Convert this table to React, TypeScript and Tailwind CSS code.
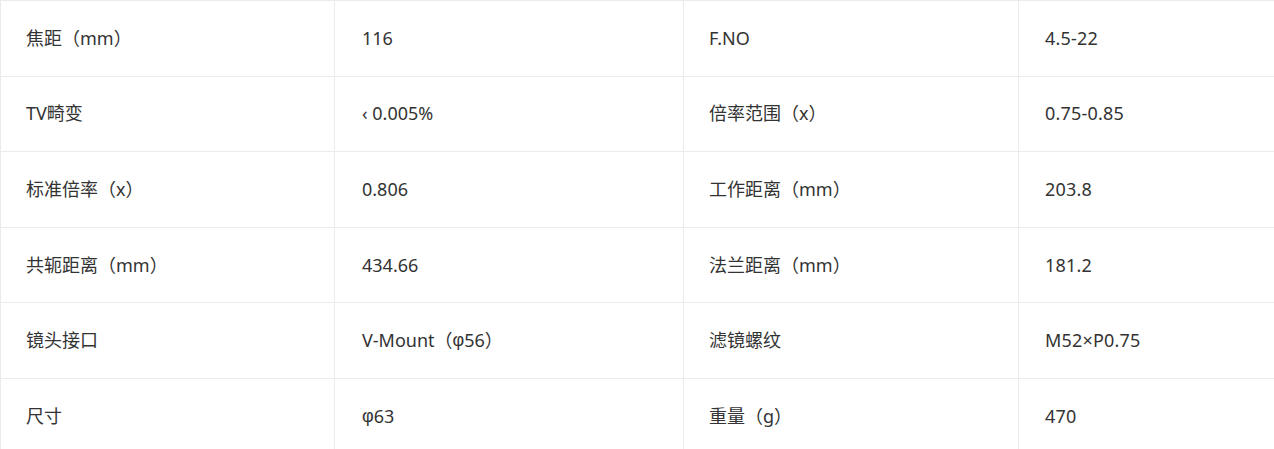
import React from 'react';

type Spec = { label: string; value: React.ReactNode };

const Phi = () => <span style={{ fontFamily: '"Liberation Sans", sans-serif' }}>φ</span>;

const rows: [Spec, Spec][] = [
  [{ label: '焦距（mm）', value: '116' }, { label: 'F.NO', value: '4.5-22' }],
  [{ label: 'TV畸变', value: '‹ 0.005%' }, { label: '倍率范围（x）', value: '0.75-0.85' }],
  [{ label: '标准倍率（x）', value: '0.806' }, { label: '工作距离（mm）', value: '203.8' }],
  [{ label: '共轭距离（mm）', value: '434.66' }, { label: '法兰距离（mm）', value: '181.2' }],
  [
    { label: '镜头接口', value: <>V-Mount（<Phi />56）</> },
    { label: '滤镜螺纹', value: 'M52×P0.75' },
  ],
  [{ label: '尺寸', value: <><Phi />63</> }, { label: '重量（g）', value: '470' }],
];

const cell = 'h-[75.6px] flex items-center border-b border-[#ebebeb] pl-[25px]';

const App: React.FC = () => {
  return (
    <div
      className="w-[1274px] h-[449px] overflow-hidden bg-white text-[#333] text-[18px]"
      style={{ fontFamily: '"Noto Sans", "Noto Sans CJK SC", sans-serif' }}
    >
      <div className="grid grid-cols-[334px_349px_335px_1fr] border-t border-l border-[#ebebeb]">
        {rows.map(([a, b], i) => (
          <React.Fragment key={i}>
            <div className={`${cell} border-r`}>{a.label}</div>
            <div className={`${cell} border-r pl-[27px]`}>{a.value}</div>
            <div className={`${cell} border-r`}>{b.label}</div>
            <div className={`${cell} pl-[26px] tracking-[0.2px]`}>{b.value}</div>
          </React.Fragment>
        ))}
      </div>
    </div>
  );
};

export default App;
